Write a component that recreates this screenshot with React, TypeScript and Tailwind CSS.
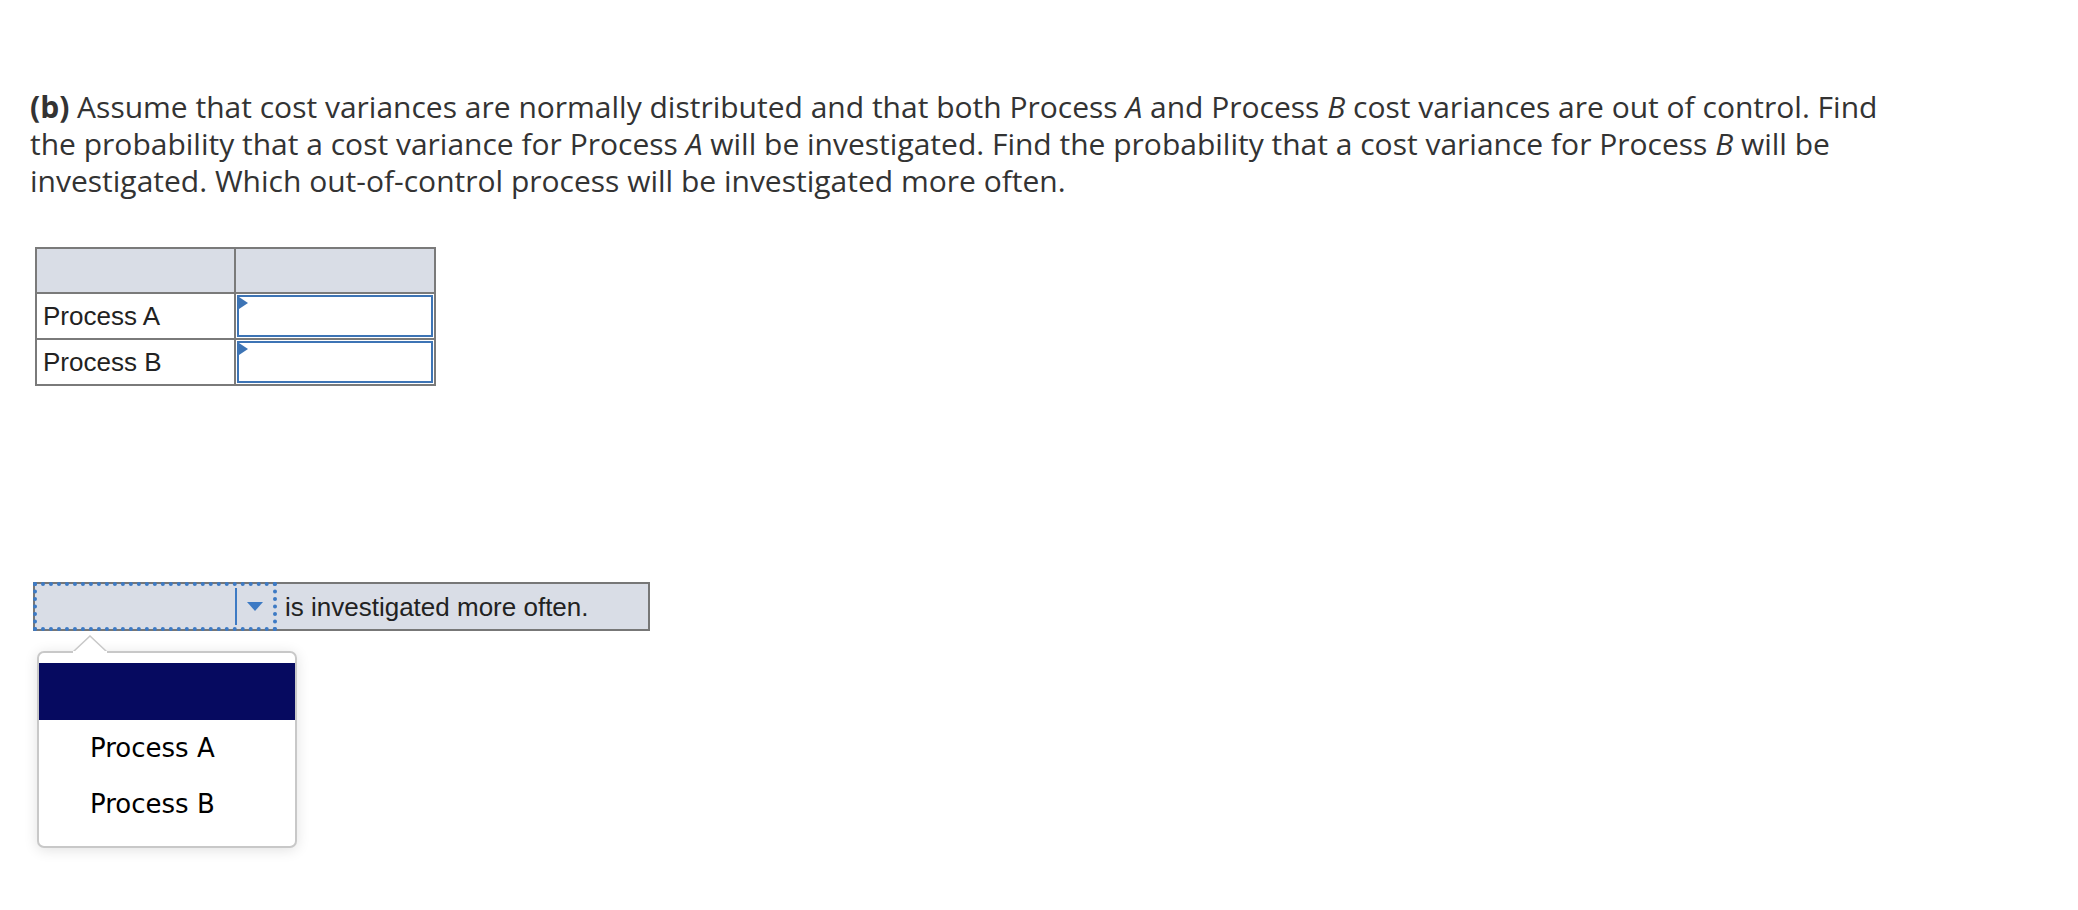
import React from "react";

export default function App() {
  return (
    <div className="min-h-[910px] w-[2078px] bg-white">
      <div className="pl-[30px] pt-[88px] text-[30px] leading-[37px] text-[#333333] font-['Open_Sans',sans-serif]">
        <div className="whitespace-nowrap">
          <span className="font-bold">(b)</span> Assume that cost variances are normally distributed and that both Process <i>A</i> and Process <i>B</i> cost variances are out of control. Find
        </div>
        <div className="whitespace-nowrap">
          the probability that a cost variance for Process <i>A</i> will be investigated. Find the probability that a cost variance for Process <i>B</i> will be
        </div>
        <div className="whitespace-nowrap">investigated. Which out-of-control process will be investigated more often.</div>
      </div>

      <div className="ml-[35px] mt-[48px] w-[401px] border-2 border-[#7a7a7a] font-['Liberation_Sans',Arial,sans-serif] text-[26px] text-[#222]">
        <div className="grid grid-cols-[199px_1fr] h-[43px] bg-[#d9dde6]">
          <div className="border-r-2 border-[#7a7a7a]" />
          <div />
        </div>
        {["Process A", "Process B"].map((p) => (
          <div key={p} className="grid grid-cols-[199px_1fr] h-[46px] border-t-2 border-[#7a7a7a]">
            <div className="border-r-2 border-[#7a7a7a] flex items-center pl-[6px]">{p}</div>
            <div className="relative m-[1px] border-2 border-[#3d74b5] bg-white">
              <svg className="absolute left-0 top-0" width="10" height="12" viewBox="0 0 10 12">
                <polygon points="0,0 9,6 0,12" fill="#3d74b5" />
              </svg>
            </div>
          </div>
        ))}
      </div>

      <div className="relative ml-[33px] mt-[196px] w-[617px]">
        <div className="flex h-[49px] items-stretch border-2 border-[#777] bg-[#d9dde6] font-['Liberation_Sans',Arial,sans-serif] text-[26px] text-[#222]">
          <div className="relative -my-[2px] -ml-[2px] flex w-[244px] border-[4px] border-dotted border-[#3d7ac4]">
            <div className="flex-1" />
            <div className="my-[2px] w-[2px] bg-[#3d7ac4]" />
            <div className="flex w-[36px] items-center justify-center">
              <svg width="16" height="9" viewBox="0 0 16 9">
                <polygon points="0,0 16,0 8,9" fill="#3d7ac4" />
              </svg>
            </div>
          </div>
          <div className="flex items-center pl-[8px] leading-none">is investigated more often.</div>
        </div>

        <div className="relative ml-[4px] mt-[20px] w-[260px]">
          <svg className="absolute left-[36px] top-[-16px] z-10" width="34" height="18" viewBox="0 0 34 18">
            <polygon points="0,17 17,1 34,17" fill="#ffffff" stroke="#c8c8c8" strokeWidth="1.5" />
            <rect x="0" y="16" width="34" height="3" fill="#ffffff" />
          </svg>
          <div className="rounded-[7px] border-2 border-[#c8c8c8] bg-white pt-[10px] pb-[14px] shadow-[0_2px_14px_rgba(0,0,0,0.12)] font-['DejaVu_Sans',Verdana,sans-serif] text-[26px] text-black">
            <div className="h-[57px] bg-[#060a60]" />
            <div className="flex h-[56px] items-center pl-[51px]">Process A</div>
            <div className="flex h-[56px] items-center pl-[51px]">Process B</div>
          </div>
        </div>
      </div>
    </div>
  );
}
